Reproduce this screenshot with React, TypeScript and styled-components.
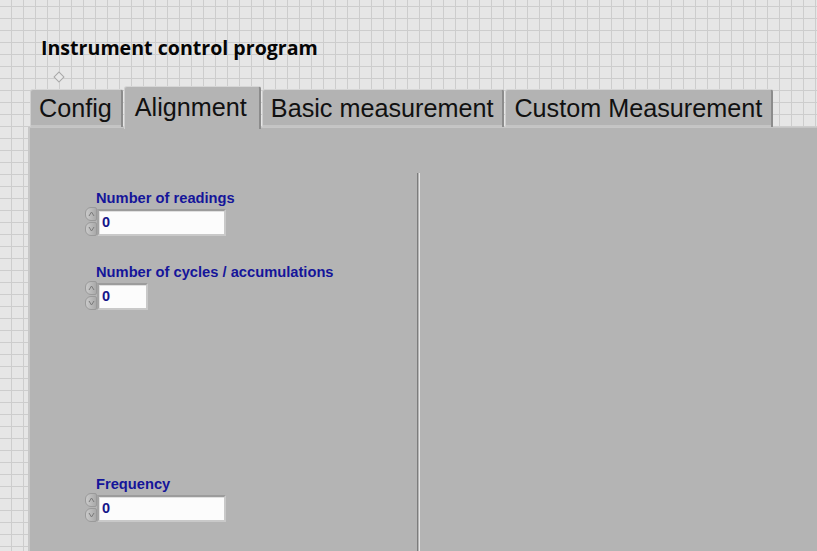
import React, { useState } from "react";
import styled, { createGlobalStyle } from "styled-components";

const GlobalStyle = createGlobalStyle`
  html, body {
    margin: 0;
    padding: 0;
  }
  body {
    overflow: hidden;
    background-color: #e6e6e6;
    background-image:
      linear-gradient(to right, #cdcdcd 1px, transparent 1px),
      linear-gradient(to bottom, #cdcdcd 1px, transparent 1px);
    background-size: 12px 12px;
    background-position: -1px 6px;
    font-family: "Liberation Sans", Arial, sans-serif;
  }
`;

const Panel = styled.main`
  width: 817px;
  height: 551px;
  overflow: hidden;
  display: flex;
  flex-direction: column;
`;

const Title = styled.h1`
  margin: 0;
  padding: 34px 0 0 41px;
  height: 28px;
  font-family: "Open Sans", "DejaVu Sans", sans-serif;
  font-weight: 700;
  font-size: 19.6px;
  line-height: 28px;
  color: #050505;
`;

const Anchor = styled.div`
  width: 6px;
  height: 6px;
  margin: 11px 0 0 55px;
  transform: rotate(45deg);
  background: #e8e8e8;
  border: 1px solid #a8a8a8;
`;

const TabControl = styled.section`
  margin: 5px 0 0 28px;
  display: flex;
  flex-direction: column;
  flex: 1;
`;

const TabRow = styled.div`
  display: flex;
  align-items: flex-end;
  gap: 1px;
  padding-left: 2px;
  height: 41px;
  position: relative;
  z-index: 1;
`;

const Tab = styled.button<{ $active?: boolean }>`
  box-sizing: border-box;
  height: ${({ $active }) => ($active ? "43px" : "38px")};
  margin-bottom: ${({ $active }) => ($active ? "-2px" : "0")};
  padding: ${({ $active }) => ($active ? "4px 12px 0 10px" : "2px 9px 0 8px")};
  border: none;
  border-top: 1px solid #d6d6d6;
  border-left: 1px solid #cfcfcf;
  border-right: 2px solid #8c8c8c;
  border-radius: 3px 3px 0 0;
  background: ${({ $active }) => ($active ? "#b4b4b4" : "#b3b3b3")};
  box-shadow: ${({ $active }) =>
    $active ? "none" : "inset 0 -2px 0 #c4c4c4"};
  font-family: "Liberation Sans", Arial, sans-serif;
  font-size: 25.2px;
  line-height: 32px;
  color: #111;
  text-align: left;
  white-space: nowrap;
  cursor: default;
  display: flex;
  align-items: flex-start;
`;

const TabBody = styled.div`
  flex: 1;
  display: flex;
  background: #b4b4b4;
  border-top: 1px solid #c6c6c6;
  border-left: 2px solid #c8c8c8;
`;

const LeftPane = styled.div`
  width: 332px;
  padding: 62px 0 0 55px;
  display: flex;
  flex-direction: column;
`;

const Divider = styled.div`
  width: 1px;
  margin-top: 45px;
  border-left: 1px solid #7c7c7c;
  border-right: 1px solid #e4e4e4;
`;

const RightPane = styled.div`
  flex: 1;
`;

const Field = styled.div<{ $top: number }>`
  margin-top: ${({ $top }) => $top}px;
  display: flex;
  flex-direction: column;
`;

const Label = styled.label`
  margin-left: 11px;
  font-family: "Liberation Sans", Arial, sans-serif;
  font-weight: 700;
  font-size: 14.7px;
  line-height: 16px;
  color: #15159a;
  white-space: nowrap;
`;

const ControlRow = styled.div`
  display: flex;
  align-items: flex-end;
  margin-top: 1px;
`;

const Spinner = styled.div`
  width: 12px;
  height: 29px;
  display: flex;
  flex-direction: column;
  gap: 1px;
`;

const SpinButton = styled.div`
  flex: 1;
  box-sizing: border-box;
  border-radius: 6px 2px 2px 6px;
  background: linear-gradient(to right, #cacaca, #a9a9a9);
  border: 1px solid #9a9a9a;
  display: flex;
  align-items: center;
  justify-content: center;
`;

const NumberBox = styled.div<{ $width: number }>`
  box-sizing: border-box;
  width: ${({ $width }) => $width}px;
  height: 27px;
  border: 2px solid #c9c9c9;
  border-top-color: #9c9c9c;
  border-left-color: #a4a4a4;
  background: #fcfcfc;
  box-shadow: inset 1px 1px 0 #e0e0e0;
  padding: 0 0 0 3px;
  font-family: "Liberation Sans", Arial, sans-serif;
  font-weight: 700;
  font-size: 14.5px;
  line-height: 23px;
  color: #15158a;
`;

function Arrow({ up }: { up?: boolean }) {
  return (
    <svg width="7" height="6" viewBox="0 0 7 6">
      <path
        d={up ? "M1 5 L3.5 1 L6 5" : "M1 1 L3.5 5 L6 1"}
        fill="none"
        stroke="#7a7a7a"
        strokeWidth="1"
      />
    </svg>
  );
}

function Numeric({ label, width, top }: { label: string; width: number; top: number }) {
  return (
    <Field $top={top}>
      <Label>{label}</Label>
      <ControlRow>
        <Spinner>
          <SpinButton>
            <Arrow up />
          </SpinButton>
          <SpinButton>
            <Arrow />
          </SpinButton>
        </Spinner>
        <NumberBox $width={width}>0</NumberBox>
      </ControlRow>
    </Field>
  );
}

const tabs = ["Config", "Alignment", "Basic measurement", "Custom Measurement"];

export default function App() {
  const [active, setActive] = useState("Alignment");

  return (
    <>
      <GlobalStyle />
      <Panel>
        <Title>{"Instrument control program"}</Title>
        <Anchor />
        <TabControl>
          <TabRow>
            {tabs.map((t) => (
              <Tab key={t} type="button" $active={t === active} onClick={() => setActive(t)}>
                {t}
              </Tab>
            ))}
          </TabRow>
          <TabBody>
            <LeftPane>
              <Numeric label="Number of readings" width={129} top={0} />
              <Numeric label="Number of cycles / accumulations" width={51} top={28} />
              <Numeric label="Frequency" width={129} top={166} />
            </LeftPane>
            <Divider />
            <RightPane />
          </TabBody>
        </TabControl>
      </Panel>
    </>
  );
}
